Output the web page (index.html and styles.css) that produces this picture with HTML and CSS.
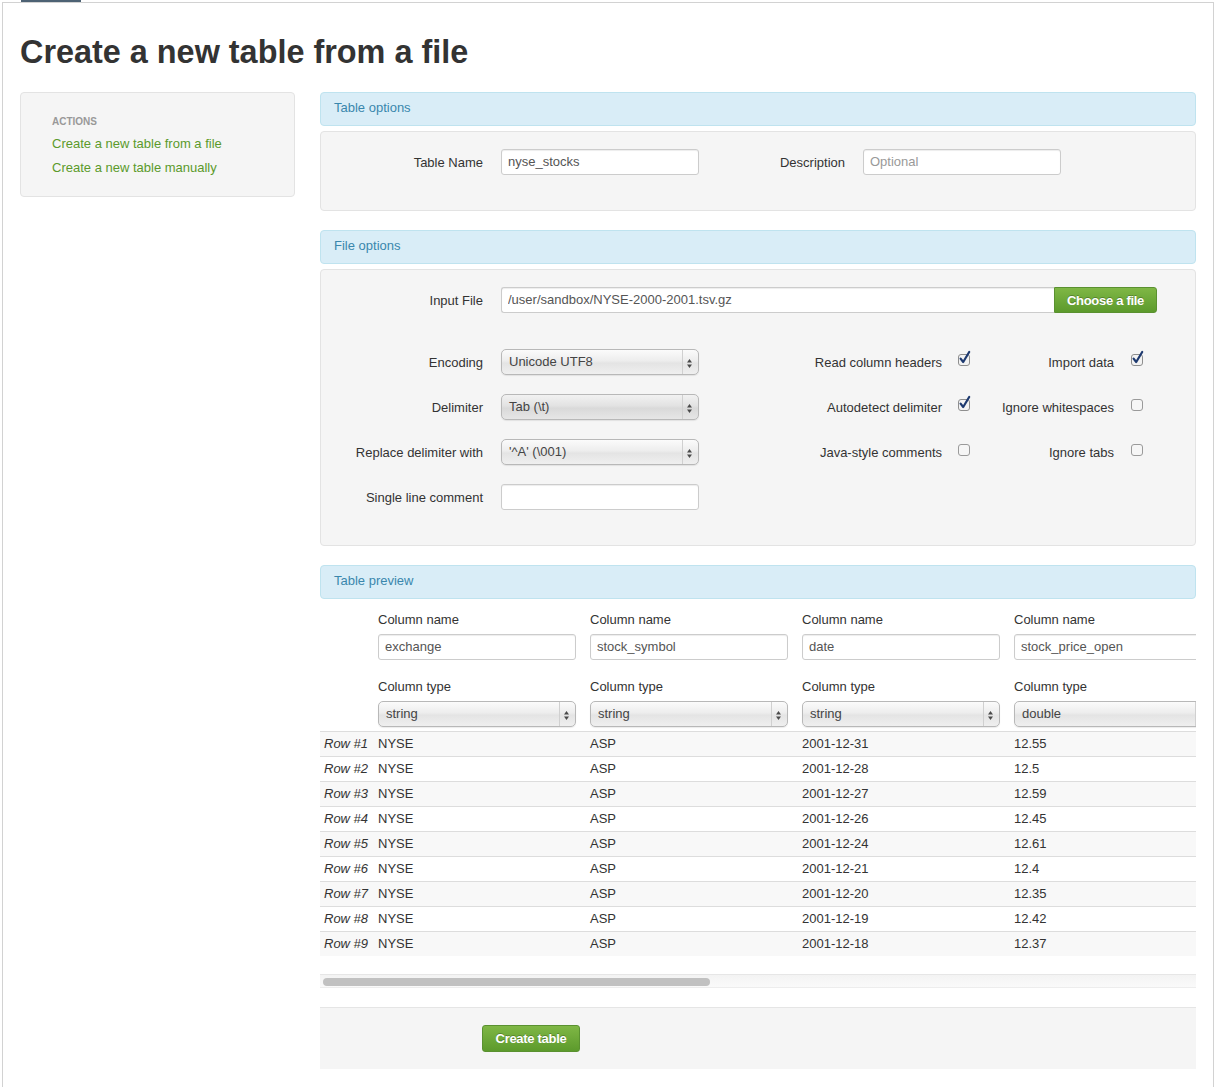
FILE: index.html
```html
<!DOCTYPE html>
<html>
<head>
<meta charset="utf-8">
<title>Create a new table from a file</title>
<link rel="stylesheet" href="styles.css">
</head>
<body>
<div class="topbar"><div class="tab"></div></div>
<div class="page">
  <h1 class="title">Create a new table from a file</h1>
  <div class="layout">
    <aside class="sidebar">
      <div class="nav-header">Actions</div>
      <a class="nav-link" href="#">Create a new table from a file</a>
      <a class="nav-link" href="#">Create a new table manually</a>
    </aside>
    <main class="main">
      <div class="section-head">Table options</div>
      <div class="panel">
        <div class="row">
          <label class="lbl">Table Name</label>
          <input class="text ctl" type="text" value="nyse_stocks">
          <label class="lbl lbl-desc">Description</label>
          <input class="text ctl" type="text" placeholder="Optional">
        </div>
      </div>

      <div class="section-head">File options</div>
      <div class="panel">
        <div class="row row-file">
          <label class="lbl">Input File</label>
          <div class="file-group">
            <input class="text file-input" type="text" value="/user/sandbox/NYSE-2000-2001.tsv.gz">
            <button class="btn btn-green btn-attach" type="button">Choose a file</button>
          </div>
        </div>
        <div class="row">
          <label class="lbl">Encoding</label>
          <div class="select ctl"><span class="sel-text">Unicode UTF8</span><span class="sel-arrows"><svg width="16" height="24" viewBox="0 0 16 24"><polygon points="5,12.5 7.5,9 10,12.5" fill="#4a4a4a"/><polygon points="5,14.5 10,14.5 7.5,18" fill="#4a4a4a"/></svg></span></div>
          <label class="lbl lbl-chk">Read column headers</label>
          <span class="chk"><svg width="14" height="15" viewBox="0 0 14 15"><rect x="0.5" y="3.5" width="11" height="11" rx="2.5" fill="#f3f3f3" stroke="#8e8e8e"/><path d="M2.6 7.6 L5.2 11 L11.2 1" fill="none" stroke="#1e3a70" stroke-width="2.2" stroke-linecap="round" stroke-linejoin="round"/></svg></span>
          <label class="lbl lbl-chk2">Import data</label>
          <span class="chk"><svg width="14" height="15" viewBox="0 0 14 15"><rect x="0.5" y="3.5" width="11" height="11" rx="2.5" fill="#f3f3f3" stroke="#8e8e8e"/><path d="M2.6 7.6 L5.2 11 L11.2 1" fill="none" stroke="#1e3a70" stroke-width="2.2" stroke-linecap="round" stroke-linejoin="round"/></svg></span>
        </div>
        <div class="row">
          <label class="lbl">Delimiter</label>
          <div class="select select-dark ctl"><span class="sel-text">Tab (\t)</span><span class="sel-arrows"><svg width="16" height="24" viewBox="0 0 16 24"><polygon points="5,12.5 7.5,9 10,12.5" fill="#4a4a4a"/><polygon points="5,14.5 10,14.5 7.5,18" fill="#4a4a4a"/></svg></span></div>
          <label class="lbl lbl-chk">Autodetect delimiter</label>
          <span class="chk"><svg width="14" height="15" viewBox="0 0 14 15"><rect x="0.5" y="3.5" width="11" height="11" rx="2.5" fill="#f3f3f3" stroke="#8e8e8e"/><path d="M2.6 7.6 L5.2 11 L11.2 1" fill="none" stroke="#1e3a70" stroke-width="2.2" stroke-linecap="round" stroke-linejoin="round"/></svg></span>
          <label class="lbl lbl-chk2">Ignore whitespaces</label>
          <span class="chk"><svg width="14" height="15" viewBox="0 0 14 15"><rect x="0.5" y="3.5" width="11" height="11" rx="2.5" fill="#f6f6f6" stroke="#9a9a9a"/></svg></span>
        </div>
        <div class="row">
          <label class="lbl">Replace delimiter with</label>
          <div class="select ctl"><span class="sel-text">'^A' (\001)</span><span class="sel-arrows"><svg width="16" height="24" viewBox="0 0 16 24"><polygon points="5,12.5 7.5,9 10,12.5" fill="#4a4a4a"/><polygon points="5,14.5 10,14.5 7.5,18" fill="#4a4a4a"/></svg></span></div>
          <label class="lbl lbl-chk">Java-style comments</label>
          <span class="chk"><svg width="14" height="15" viewBox="0 0 14 15"><rect x="0.5" y="3.5" width="11" height="11" rx="2.5" fill="#f6f6f6" stroke="#9a9a9a"/></svg></span>
          <label class="lbl lbl-chk2">Ignore tabs</label>
          <span class="chk"><svg width="14" height="15" viewBox="0 0 14 15"><rect x="0.5" y="3.5" width="11" height="11" rx="2.5" fill="#f6f6f6" stroke="#9a9a9a"/></svg></span>
        </div>
        <div class="row">
          <label class="lbl">Single line comment</label>
          <input class="text ctl" type="text" value="">
        </div>
      </div>

      <div class="section-head">Table preview</div>
      <div class="scroller">
        <table class="preview">
          <colgroup>
            <col class="c-row">
            <col class="c-data">
            <col class="c-data">
            <col class="c-data">
            <col class="c-data">
          </colgroup>
          <thead>
            <tr>
              <th class="rowhead"></th>
              <th><span class="th-label">Column name</span><input class="text col-input" type="text" value="exchange"><span class="th-label">Column type</span><div class="select"><span class="sel-text">string</span><span class="sel-arrows"><svg width="16" height="24" viewBox="0 0 16 24"><polygon points="5,12.5 7.5,9 10,12.5" fill="#4a4a4a"/><polygon points="5,14.5 10,14.5 7.5,18" fill="#4a4a4a"/></svg></span></div></th>
              <th><span class="th-label">Column name</span><input class="text col-input" type="text" value="stock_symbol"><span class="th-label">Column type</span><div class="select"><span class="sel-text">string</span><span class="sel-arrows"><svg width="16" height="24" viewBox="0 0 16 24"><polygon points="5,12.5 7.5,9 10,12.5" fill="#4a4a4a"/><polygon points="5,14.5 10,14.5 7.5,18" fill="#4a4a4a"/></svg></span></div></th>
              <th><span class="th-label">Column name</span><input class="text col-input" type="text" value="date"><span class="th-label">Column type</span><div class="select"><span class="sel-text">string</span><span class="sel-arrows"><svg width="16" height="24" viewBox="0 0 16 24"><polygon points="5,12.5 7.5,9 10,12.5" fill="#4a4a4a"/><polygon points="5,14.5 10,14.5 7.5,18" fill="#4a4a4a"/></svg></span></div></th>
              <th><span class="th-label">Column name</span><input class="text col-input" type="text" value="stock_price_open"><span class="th-label">Column type</span><div class="select"><span class="sel-text">double</span><span class="sel-arrows"><svg width="16" height="24" viewBox="0 0 16 24"><polygon points="5,12.5 7.5,9 10,12.5" fill="#4a4a4a"/><polygon points="5,14.5 10,14.5 7.5,18" fill="#4a4a4a"/></svg></span></div></th>
            </tr>
          </thead>
          <tbody>
            <tr><td class="rowhead">Row #1</td><td>NYSE</td><td>ASP</td><td>2001-12-31</td><td>12.55</td></tr>
            <tr><td class="rowhead">Row #2</td><td>NYSE</td><td>ASP</td><td>2001-12-28</td><td>12.5</td></tr>
            <tr><td class="rowhead">Row #3</td><td>NYSE</td><td>ASP</td><td>2001-12-27</td><td>12.59</td></tr>
            <tr><td class="rowhead">Row #4</td><td>NYSE</td><td>ASP</td><td>2001-12-26</td><td>12.45</td></tr>
            <tr><td class="rowhead">Row #5</td><td>NYSE</td><td>ASP</td><td>2001-12-24</td><td>12.61</td></tr>
            <tr><td class="rowhead">Row #6</td><td>NYSE</td><td>ASP</td><td>2001-12-21</td><td>12.4</td></tr>
            <tr><td class="rowhead">Row #7</td><td>NYSE</td><td>ASP</td><td>2001-12-20</td><td>12.35</td></tr>
            <tr><td class="rowhead">Row #8</td><td>NYSE</td><td>ASP</td><td>2001-12-19</td><td>12.42</td></tr>
            <tr><td class="rowhead">Row #9</td><td>NYSE</td><td>ASP</td><td>2001-12-18</td><td>12.37</td></tr>
          </tbody>
        </table>
      </div>
      <div class="hscroll"><div class="hscroll-thumb"></div></div>

      <div class="form-actions">
        <button class="btn btn-green btn-create" type="button">Create table</button>
      </div>
    </main>
  </div>
</div>
</body>
</html>
```

FILE: styles.css
```css
* { box-sizing: border-box; }

html, body {
  margin: 0;
  padding: 0;
  background: #ffffff;
}

body {
  font-family: "Liberation Sans", Arial, Helvetica, sans-serif;
  font-size: 13px;
  color: #333333;
}

.topbar {
  height: 2px;
}

.tab {
  margin-left: 21px;
  width: 60px;
  height: 2px;
  background: #4d6274;
}

.page {
  margin: 0 1px 0 2px;
  border: 1px solid #d2d2d2;
  border-bottom: none;
  min-height: 1085px;
  padding: 29px 17px 0 17px;
}

.title {
  margin: 0 0 20px 0;
  font-size: 32.4px;
  line-height: 40px;
  font-weight: bold;
  color: #333333;
}

.layout {
  display: flex;
  align-items: flex-start;
  gap: 25px;
}

/* Sidebar */
.sidebar {
  width: 275px;
  flex: none;
  background: #f5f5f5;
  border: 1px solid #e3e3e3;
  border-radius: 4px;
  padding: 19px 15px 16px 31px;
}

.nav-header {
  font-size: 10px;
  line-height: 20px;
  font-weight: bold;
  text-transform: uppercase;
  color: #999999;
}

.nav-link {
  display: block;
  line-height: 24px;
  color: #5b9a2b;
  text-decoration: none;
}

/* Main */
.main {
  width: 876px;
  flex: none;
}

.section-head {
  background: #d9edf7;
  border: 1px solid #bfe3ef;
  border-radius: 4px;
  color: #3a87ad;
  line-height: 30px;
  padding: 0 13px 2px 13px;
  margin-bottom: 5px;
}

.panel {
  background: #f5f5f5;
  border: 1px solid #e3e3e3;
  border-radius: 4px;
  padding: 17px 0 35px 0;
  margin-bottom: 19px;
}

.row {
  display: flex;
  align-items: flex-start;
  height: 26px;
  margin-bottom: 19px;
}

.row:last-child {
  margin-bottom: 0;
}

.row-file {
  margin-bottom: 36px;
}

.lbl {
  flex: none;
  width: 180px;
  height: 26px;
  padding-right: 18px;
  text-align: right;
  line-height: 25px;
  padding-top: 1px;
  color: #333333;
}

.lbl-desc {
  width: 164px;
}

.lbl-chk {
  width: 259px;
  padding-right: 16px;
}

.lbl-chk2 {
  width: 161px;
  padding-right: 17px;
}

.chk {
  flex: none;
  width: 12px;
  height: 26px;
  padding-top: 2px;
}

.chk svg {
  display: block;
  overflow: visible;
}

.text {
  height: 26px;
  border: 1px solid #cccccc;
  border-radius: 3px;
  background: #ffffff;
  box-shadow: inset 0 1px 1px rgba(0, 0, 0, 0.075);
  padding: 0 6px 2px 6px;
  font-family: "Liberation Sans", Arial, Helvetica, sans-serif;
  font-size: 13px;
  color: #555555;
  outline: none;
  margin: 0;
}

.text::placeholder {
  color: #999999;
}

.ctl {
  flex: none;
  width: 198px;
}

.file-group {
  display: flex;
}

.file-input {
  width: 553px;
  border-radius: 3px 0 0 3px;
  border-right: none;
}

/* Select look-alike */
.select {
  position: relative;
  display: flex;
  width: 198px;
  height: 26px;
  border: 1px solid #b8b8b8;
  border-radius: 5px;
  background: linear-gradient(to bottom, #fbfbfb 0%, #ededed 45%, #e4e4e4 55%, #efefef 100%);
  box-shadow: 0 1px 1px rgba(0, 0, 0, 0.08);
  color: #444444;
  overflow: hidden;
}

.select-dark {
  background: linear-gradient(to bottom, #f2f2f2 0%, #e2e2e2 45%, #d9d9d9 55%, #e6e6e6 100%);
}

.sel-text {
  flex: 1;
  padding-left: 7px;
  line-height: 24px;
  white-space: nowrap;
}

.sel-arrows {
  flex: none;
  width: 16px;
  height: 24px;
  border-left: 1px solid #d0d0d0;
}

.sel-arrows svg {
  display: block;
  margin-left: -1px;
}

/* Buttons */
.btn {
  font-family: "Liberation Sans", Arial, Helvetica, sans-serif;
  font-size: 13px;
  font-weight: bold;
  color: #ffffff;
  text-shadow: 0 -1px 0 rgba(0, 0, 0, 0.25);
  border: 1px solid #5a9130;
  border-radius: 3px;
  background: linear-gradient(to bottom, #7fb745 0%, #5c9a2c 100%);
  cursor: pointer;
  margin: 0;
  padding: 0;
  letter-spacing: -0.3px;
}

.btn-attach {
  width: 103px;
  height: 26px;
  border-radius: 0 3px 3px 0;
}

.btn-create {
  width: 98px;
  height: 27px;
}

/* Table preview */
.scroller {
  width: 876px;
  overflow: hidden;
  padding-bottom: 18px;
}

.preview {
  width: 906px;
  table-layout: fixed;
  border-collapse: separate;
  border-spacing: 0;
}

.c-row { width: 58px; }
.c-data { width: 212px; }

.preview th {
  text-align: left;
  font-weight: normal;
  vertical-align: top;
  padding: 7px 14px 4px 0;
}

.preview th.rowhead {
  padding: 0;
}

.th-label {
  display: block;
  line-height: 18px;
  margin-bottom: 5px;
  color: #333333;
  white-space: nowrap;
}

.col-input {
  display: block;
  width: 198px;
  margin-bottom: 18px;
}

.preview td {
  border-top: 1px solid #dddddd;
  line-height: 24px;
  padding: 0 14px 0 0;
  white-space: nowrap;
  color: #333333;
}

.preview td.rowhead {
  padding-left: 4px;
  padding-right: 0;
  font-style: italic;
}

.preview tbody tr:nth-child(odd) td {
  background: #f8f8f8;
}

.hscroll {
  width: 876px;
  height: 14px;
  border-top: 1px solid #e6e6e6;
  border-bottom: 1px solid #ededed;
  background: linear-gradient(to bottom, #f3f3f3 0%, #fafafa 100%);
  padding: 3px 0 0 3px;
  margin-bottom: 19px;
}

.hscroll-thumb {
  width: 387px;
  height: 8px;
  border-radius: 4px;
  background: #c1c1c1;
}

.form-actions {
  width: 876px;
  background: #f5f5f5;
  border-top: 1px solid #e5e5e5;
  padding: 17px 0 17px 162px;
}
```
